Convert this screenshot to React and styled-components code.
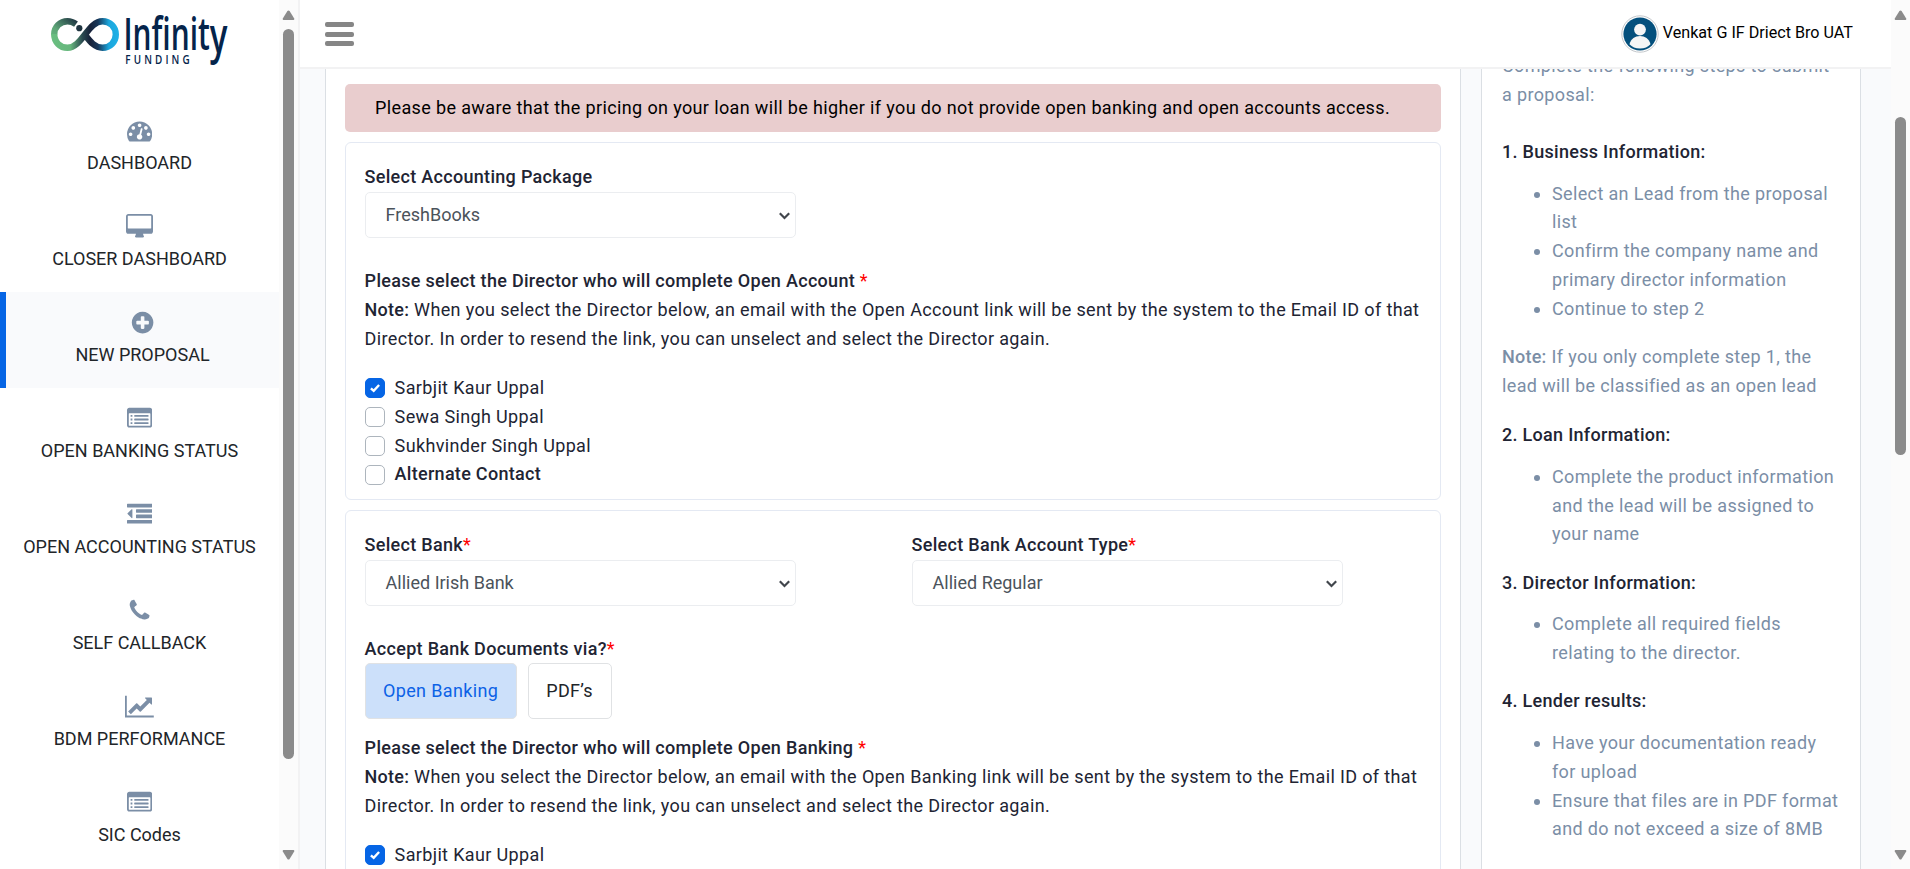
import React from "react";
import styled, { createGlobalStyle } from "styled-components";

const ink = "#212433";
const muted = "#7b8ea6";

const GlobalStyle = createGlobalStyle`
  * { box-sizing: border-box; }
  html, body, #root { height: 100%; }
  body {
    margin: 0;
    overflow: hidden;
    background: #f9fafc;
    font-family: Roboto, "Liberation Sans", sans-serif;
    font-size: 18px;
    line-height: 28.8px;
    color: ${ink};
  }
`;

const Page = styled.div`
  display: flex;
  width: 1910px;
  height: 869px;
  overflow: hidden;
`;

const Sidebar = styled.aside`
  display: flex;
  width: 300px;
  flex: none;
  background: #fff;
  border-right: 2px solid #f2f2f3;
`;

const SidebarContent = styled.div`
  width: 279px;
  overflow: hidden;
`;

const LogoBox = styled.div`
  height: 100px;
  svg { display: block; }
`;

const NavItem = styled.a`
  display: flex;
  flex-direction: column;
  align-items: center;
  height: 96px;
  padding-top: 18.2px;
  color: #212529;
  white-space: nowrap;
  border-left: ${(p) => (p.$active ? "6px solid #0665e5" : "0")};
  background: ${(p) => (p.$active ? "#f9fafc" : "transparent")};
  svg { display: block; height: 25.2px; flex: none; fill: ${muted}; }
`;

const NavLabel = styled.span`
  margin-top: 5.9px;
`;

const Track = styled.div`
  display: flex;
  flex-direction: column;
  align-items: center;
  width: 19px;
  flex: none;
  height: 869px;
  padding: 10px 0 9px;
  background: #fbfbfb;
  svg { display: block; flex: none; fill: #8b8b8b; }
`;

const Thumb = styled.div`
  width: 11px;
  height: ${(p) => p.$size}px;
  margin-top: ${(p) => p.$offset}px;
  margin-bottom: auto;
  border-radius: 6px;
  background: #8b8b8b;
`;

const Main = styled.div`
  display: flex;
  flex-direction: column;
  width: 1591px;
  flex: none;
`;

const Header = styled.header`
  display: flex;
  justify-content: space-between;
  height: 69px;
  flex: none;
  padding: 0 38px 0 25px;
  background: #fff;
  border-bottom: 2px solid #f2f2f3;
`;

const MenuButton = styled.div`
  display: flex;
  flex-direction: column;
  gap: 4.5px;
  padding-top: 22px;
`;

const MenuBar = styled.span`
  width: 29px;
  height: 5px;
  border-radius: 2px;
  background: #868686;
`;

const Account = styled.div`
  display: flex;
  gap: 4px;
  padding-top: 15px;
  font-size: 16.15px;
  line-height: 35px;
  color: #000;
  white-space: nowrap;
  svg { display: block; }
`;

const Body = styled.div`
  display: flex;
  height: 800px;
  overflow: hidden;
  gap: 20px;
  padding-left: 25px;
`;

const FormPanel = styled.section`
  width: 1136px;
  flex: none;
  height: 800px;
  overflow: hidden;
  padding: 15px 19px 0;
  background: #fff;
  border: solid #dbdfe4;
  border-width: 0 1px;
  letter-spacing: 0.365px;
`;

const Alert = styled.div`
  height: 48px;
  margin-bottom: 10px;
  padding: 0 30px;
  line-height: 47px;
  letter-spacing: 0.37px;
  border-radius: 5px;
  background: #e9cdce;
  color: #000;
`;

const Card = styled.div`
  margin-bottom: 10.2px;
  padding: 19.6px 19px 9.6px 18.6px;
  border: 1px solid #e4e9f3;
  border-radius: 6px;
`;

const Strong = styled.span`
  font-weight: 500;
  letter-spacing: 0.25px;
`;

const FieldLabel = styled.div`
  font-weight: 500;
  letter-spacing: 0.3px;
`;

const Required = styled.span`
  color: #f00;
  font-weight: 400;
`;

const Columns = styled.div`
  display: grid;
  grid-template-columns: 547px 1fr;
`;

const SelectBox = styled.div`
  display: flex;
  align-items: center;
  justify-content: space-between;
  width: 431px;
  height: 45.6px;
  margin: 0.6px 0 29.3px;
  padding: 1.2px 4px 0 20px;
  border: 1px solid #ebedf0;
  border-radius: 5px;
  color: #4b535b;
  letter-spacing: 0;
`;

const Note = styled.p`
  margin: 0 0 20.4px;
  padding-top: 0.3px;
  white-space: nowrap;
`;

const CheckRow = styled.div`
  display: flex;
  align-items: center;
  height: 28.8px;
  gap: 10px;
  font-weight: ${(p) => (p.$strong ? 500 : 400)};
  letter-spacing: ${(p) => (p.$strong ? 0.29 : 0.36)}px;
`;

const CheckBox = styled.span`
  display: flex;
  align-items: center;
  justify-content: center;
  width: 20px;
  height: 20px;
  border: 1px solid ${(p) => (p.$checked ? "#0665e5" : "#adb5bd")};
  border-radius: 5px;
  background: ${(p) => (p.$checked ? "#0665e5" : "#fff")};
`;

const ButtonRow = styled.div`
  display: flex;
  gap: 11px;
  margin: -0.5px 0 15px;
`;

const ChoiceButton = styled.div`
  width: ${(p) => p.$width}px;
  height: 55.6px;
  line-height: 53px;
  text-align: center;
  border: 1px solid #e0e2e4;
  border-radius: 5px;
  background: ${(p) => (p.$active ? "#cce0fa" : "#fff")};
  color: ${(p) => (p.$active ? "#0d62e6" : "#212529")};
`;

const HelpPanel = styled.aside`
  width: 380px;
  flex: none;
  height: 800px;
  overflow: hidden;
  padding: 0 20px;
  background: #fff;
  border: solid #dbdfe4;
  border-width: 0 1px;
  color: ${muted};
  letter-spacing: 0.36px;
`;

const HelpIntro = styled.p`
  margin: -17.1px 0 28.4px;
`;

const HelpTitle = styled.h6`
  margin: 0 0 12.9px;
  font-size: 18px;
  font-weight: 500;
  letter-spacing: 0.29px;
  color: ${ink};
`;

const HelpList = styled.ul`
  margin: 0 -15px 19.5px 0;
  padding-left: 50px;
`;

const HelpNote = styled.p`
  margin: 0 0 20.4px;
`;

const Triangle = ({ down }) => (
  <svg width="13" height="10" viewBox="0 0 13 10">
    <path
      d={down ? "M1.3 0h10.4q1 .5.5 1.5L7.6 9Q6.5 10.2 5.4 9L.8 1.5Q.3.5 1.3 0z" : "M1.3 10h10.4q1-.5.5-1.5L7.6 1Q6.500-.2 5.400 1L.8 8.500Q.3 9.500 1.300 10z"}
    />
  </svg>
);

const Scrollbar = ({ offset, size }) => (
  <Track>
    <Triangle />
    <Thumb $offset={offset} $size={size} />
    <Triangle down />
  </Track>
);

const Logo = () => (
  <svg width="279" height="100" viewBox="0 0 279 100">
    <defs>
      <linearGradient id="loopA" gradientUnits="userSpaceOnUse" x1="56" y1="44" x2="78" y2="20">
        <stop offset="0" stopColor="#66bb7d" />
        <stop offset="0.35" stopColor="#5da577" />
        <stop offset="1" stopColor="#1c3040" />
      </linearGradient>
      <linearGradient id="loopB" gradientUnits="userSpaceOnUse" x1="52" y1="0" x2="118" y2="0">
        <stop offset="0" stopColor="#69be80" />
        <stop offset="0.28" stopColor="#67b77d" />
        <stop offset="0.46" stopColor="#2a4a50" />
        <stop offset="0.58" stopColor="#17223a" />
        <stop offset="0.7" stopColor="#17375a" />
        <stop offset="0.86" stopColor="#1ba6dc" />
        <stop offset="1" stopColor="#1fb0e6" />
      </linearGradient>
    </defs>
    <g fill="none" strokeWidth="6.4">
      <path d="M76 24.200C73 22 70.500 21.200 67.500 21.200C60 21.200 54.200 27 54.200 34.500" stroke="url(#loopA)" />
      <path d="M54.200 34C54.200 42 60 47.800 67.500 47.800C82 47.800 88 21.200 102.500 21.200C110 21.200 115.800 27 115.800 34.500C115.800 42 110 47.800 102.500 47.800C95 47.800 90 41.500 85.500 35.500" stroke="url(#loopB)" />
    </g>
    <circle cx="79.300" cy="28.200" r="3.100" fill="#1f3440" />
    <g fill="#04244b" fontFamily="'Open Sans', 'Noto Sans', sans-serif">
      <text x="123.500" y="50.300" fontSize="46" fontWeight="600" textLength="104" lengthAdjust="spacingAndGlyphs">
        Infinit<tspan fontSize="51" dy="2.500">y</tspan>
      </text>
      <text x="125.300" y="64.300" fontSize="12.600" fontWeight="600" letterSpacing="4" textLength="67.500" lengthAdjust="spacingAndGlyphs">FUNDING</text>
    </g>
  </svg>
);

const icons = {
  gauge: [1792, "M384 1152q0-53-37.5-90.5t-90.5-37.5-90.5 37.5-37.5 90.5 37.5 90.5 90.5 37.5 90.5-37.5 37.5-90.5zm192-448q0-53-37.5-90.5t-90.5-37.5-90.5 37.5-37.5 90.5 37.5 90.5 90.5 37.5 90.5-37.5 37.5-90.5zm428 481l101-382q6-26-7.5-48.5t-38.5-29.5-48 6.5-30 39.5l-101 382q-60 5-107 43.5t-63 98.5q-20 77 20 146t117 89 146-20 89-117q16-60-6-117t-72-91zm660-33q0-53-37.5-90.5t-90.5-37.5-90.5 37.5-37.5 90.5 37.5 90.5 90.5 37.5 90.5-37.5 37.5-90.5zm-640-640q0-53-37.5-90.5t-90.5-37.5-90.5 37.5-37.5 90.5 37.5 90.5 90.5 37.5 90.5-37.5 37.5-90.5zm448 192q0-53-37.5-90.5t-90.5-37.5-90.5 37.5-37.5 90.5 37.5 90.5 90.5 37.5 90.5-37.5 37.5-90.5zm320 448q0 261-141 483-19 29-54 29h-1402q-35 0-54-29-141-221-141-483 0-182 71-348t191-286 286-191 348-71 348 71 286 191 191 286 71 348z"],
  desktop: [1920, "M1792 992v-832q0-13-9.5-22.5t-22.5-9.5h-1600q-13 0-22.5 9.5t-9.5 22.5v832q0 13 9.500 22.500t22.500 9.500h1600q13 0 22.500-9.500t9.500-22.500zm128-832v1088q0 66-47 113t-113 47h-544q0 37 16 77.500t32 71 16 43.500q0 26-19 45t-45 19h-512q-26 0-45-19t-19-45q0-14 16-44t32-70 16-78h-544q-66 0-113-47t-47-113v-1088q0-66 47-113t113-47h1600q66 0 113 47t47 113z"],
  plus: [1792, "M1344 960v-128q0-26-19-45t-45-19h-256v-256q0-26-19-45t-45-19h-128q-26 0-45 19t-19 45v256h-256q-26 0-45 19t-19 45v128q0 26 19 45t45 19h256v256q0 26 19 45t45 19h128q26 0 45-19t19-45v-256h256q26 0 45-19t19-45zm320-64q0 209-103 385.5t-279.5 279.5-385.5 103-385.5-103-279.5-279.5-103-385.5 103-385.5 279.5-279.5 385.5-103 385.5 103 279.5 279.5 103 385.5z"],
  list: [1792, "M160 128h1472q66 0 113 47t47 113v1088q0 66-47 113t-113 47H160q-66 0-113-47t-47-113V288q0-66 47-113t113-47zM128 544v832q0 32 32 32h1472q32 0 32-32V544q0-32-32-32H160q-32 0-32 32zM256 640h128v128H256zM256 896h128v128H256zM256 1152h128v128H256zM544 640h960q32 0 32 32v64q0 32-32 32H544q-32 0-32-32v-64q0-32 32-32zM544 896h960q32 0 32 32v64q0 32-32 32H544q-32 0-32-32v-64q0-32 32-32zM544 1152h960q32 0 32 32v64q0 32-32 32H544q-32 0-32-32v-64q0-32 32-32z"],
  outdent: [1792, "M384 544v576q0 13-9.5 22.5t-22.5 9.5q-14 0-23-9l-288-288q-9-9-9-23t9-23l288-288q9-9 23-9 13 0 22.5 9.5t9.5 22.5zM32 1280h1728q32 0 32 32v192q0 32-32 32H32q-32 0-32-32v-192q0-32 32-32zM672 896h1088q32 0 32 32v192q0 32-32 32H672q-32 0-32-32V928q0-32 32-32zM672 512h1088q32 0 32 32v192q0 32-32 32H672q-32 0-32-32V544q0-32 32-32zM32 128h1728q32 0 32 32v192q0 32-32 32H32q-32 0-32-32V160q0-32 32-32z"],
  phone: [1792, "M1600 1240q0 27-10 70.5t-21 68.5q-21 50-122 106-94 51-186 51-27 0-53-3.5t-57.5-12.5-47-14.5-55.5-20.5-49-18q-98-35-175-83-127-79-264-216t-216-264q-48-77-83-175-3-9-18-49t-20.5-55.5-14.5-47-12.5-57.5-3.5-53q0-92 51-186 56-101 106-122 25-11 68.5-21t70.5-10q14 0 21 3 18 6 53 76 11 19 30 54t35 63.5 31 53.5q3 4 17.5 25t21.5 35.5 7 28.5q0 20-28.5 50t-62 55-62 53-28.5 46q0 9 5 22.5t8.5 20.5 14 24 11.5 19q76 137 174 235t235 174q2 1 19 11.5t24 14 20.5 8.5 22.5 5q18 0 46-28.5t53-62 55-62 50-28.5q14 0 28.5 7t35.5 21.5 25 17.5q25 15 53.500 31t63.500 35 54 30q70 35 76 53 3 7 3 21z"],
  chart: [2048, "M2048 1536v128h-2048v-1536h128v1408h1920zm-128-1248v435q0 21-19.5 29.5t-35.5-7.5l-121-121-633 633q-10 10-23 10t-23-10l-233-233-416 416-192-192 585-585q10-10 23-10t23 10l233 233 464-464-121-121q-16-16-7.5-35.5t29.5-19.5h435q14 0 23 9t9 23z"],
};

const NavIcon = ({ name }) => {
  const [width, path] = icons[name];
  return (
    <svg width={(width * 25.2) / 1792} viewBox={`0 0 ${width} 1792`}>
      <path fillRule="evenodd" d={path} />
    </svg>
  );
};

const Avatar = () => (
  <svg width="38" height="38" viewBox="0 0 38 38">
    <defs>
      <clipPath id="face"><circle cx="19" cy="19" r="16.600" /></clipPath>
    </defs>
    <circle cx="19" cy="19" r="18.200" fill="#fff" stroke="#c4c8cc" strokeWidth="1" />
    <circle cx="19" cy="19" r="16.600" fill="#04507d" />
    <g fill="#f5f6f6" clipPath="url(#face)">
      <circle cx="19" cy="14.600" r="5.900" />
      <path d="M8.500 29.200C10 23.700 14 21 19 21s9 2.700 10.500 8.200C27 32 23.500 33.600 19 33.600S11 32 8.500 29.200z" />
    </g>
  </svg>
);

const Select = ({ value }) => (
  <SelectBox>
    <span>{value}</span>
    <svg width="13" height="9" viewBox="0 0 13 9">
      <path d="M1.800 2.300 6.500 7l4.700-4.700" fill="none" stroke="#41464c" strokeWidth="2.200" />
    </svg>
  </SelectBox>
);

const Check = ({ checked, strong, children }) => (
  <CheckRow $strong={strong}>
    <CheckBox $checked={checked}>
      {checked && (
        <svg width="12" height="12" viewBox="0 0 12 12">
          <path d="M1.900 6.300 4.700 8.800 10.100 3" fill="none" stroke="#fff" strokeWidth="2.400" />
        </svg>
      )}
    </CheckBox>
    <span>{children}</span>
  </CheckRow>
);

const DirectorPrompt = ({ kind }) => (
  <>
    <FieldLabel>
      Please select the Director who will complete {kind} <Required>*</Required>
    </FieldLabel>
    <Note>
      <Strong>Note:</Strong> When you select the Director below, an email with the {kind} link will be sent by the system to the Email ID of that
      <br />
      Director. In order to resend the link, you can unselect and select the Director again.
    </Note>
  </>
);

const nav = [
  ["gauge", "DASHBOARD"],
  ["desktop", "CLOSER DASHBOARD"],
  ["plus", "NEW PROPOSAL", true],
  ["list", "OPEN BANKING STATUS"],
  ["outdent", "OPEN ACCOUNTING STATUS"],
  ["phone", "SELF CALLBACK"],
  ["chart", "BDM PERFORMANCE"],
  ["list", "SIC Codes"],
];

export default function App() {
  return (
    <Page>
      <GlobalStyle />
      <Sidebar>
        <SidebarContent>
          <LogoBox><Logo /></LogoBox>
          {nav.map(([icon, label, active]) => (
            <NavItem key={label} $active={active}>
              <NavIcon name={icon} />
              <NavLabel>{label}</NavLabel>
            </NavItem>
          ))}
        </SidebarContent>
        <Scrollbar offset={9} size={730} />
      </Sidebar>
      <Main>
        <Header>
          <MenuButton><MenuBar /><MenuBar /><MenuBar /></MenuButton>
          <Account>
            <Avatar />
            <span>Venkat G IF Driect Bro UAT</span>
          </Account>
        </Header>
        <Body>
          <FormPanel>
            <Alert>
              Please be aware that the pricing on your loan will be higher if you do not provide open banking and open accounts access.
            </Alert>
            <Card>
              <FieldLabel>Select Accounting Package</FieldLabel>
              <Select value="FreshBooks" />
              <DirectorPrompt kind="Open Account" />
              <Check checked>Sarbjit Kaur Uppal</Check>
              <Check>Sewa Singh Uppal</Check>
              <Check>Sukhvinder Singh Uppal</Check>
              <Check strong>Alternate Contact</Check>
            </Card>
            <Card>
              <Columns>
                <div>
                  <FieldLabel>Select Bank<Required>*</Required></FieldLabel>
                  <Select value="Allied Irish Bank" />
                </div>
                <div>
                  <FieldLabel>Select Bank Account Type<Required>*</Required></FieldLabel>
                  <Select value="Allied Regular" />
                </div>
              </Columns>
              <FieldLabel>Accept Bank Documents via?<Required>*</Required></FieldLabel>
              <ButtonRow>
                <ChoiceButton $active $width={152}>Open Banking</ChoiceButton>
                <ChoiceButton $width={84}>PDF’s</ChoiceButton>
              </ButtonRow>
              <DirectorPrompt kind="Open Banking" />
              <Check checked>Sarbjit Kaur Uppal</Check>
            </Card>
          </FormPanel>
          <HelpPanel>
            <HelpIntro>
              Complete the following steps to submit a proposal:
            </HelpIntro>
            <HelpTitle>1. Business Information:</HelpTitle>
            <HelpList>
              <li>Select an Lead from the proposal<br />list</li>
              <li>Confirm the company name and<br />primary director information</li>
              <li>Continue to step 2</li>
            </HelpList>
            <HelpNote>
              <Strong>Note:</Strong> If you only complete step 1, the lead will be classified as an open lead
            </HelpNote>
            <HelpTitle>2. Loan Information:</HelpTitle>
            <HelpList>
              <li>Complete the product information<br />and the lead will be assigned to<br />your name</li>
            </HelpList>
            <HelpTitle>3. Director Information:</HelpTitle>
            <HelpList>
              <li>Complete all required fields<br />relating to the director.</li>
            </HelpList>
            <HelpTitle>4. Lender results:</HelpTitle>
            <HelpList>
              <li>Have your documentation ready<br />for upload</li>
              <li>Ensure that files are in PDF format<br />and do not exceed a size of 8MB</li>
            </HelpList>
          </HelpPanel>
        </Body>
      </Main>
      <Scrollbar offset={97} size={338} />
    </Page>
  );
}
